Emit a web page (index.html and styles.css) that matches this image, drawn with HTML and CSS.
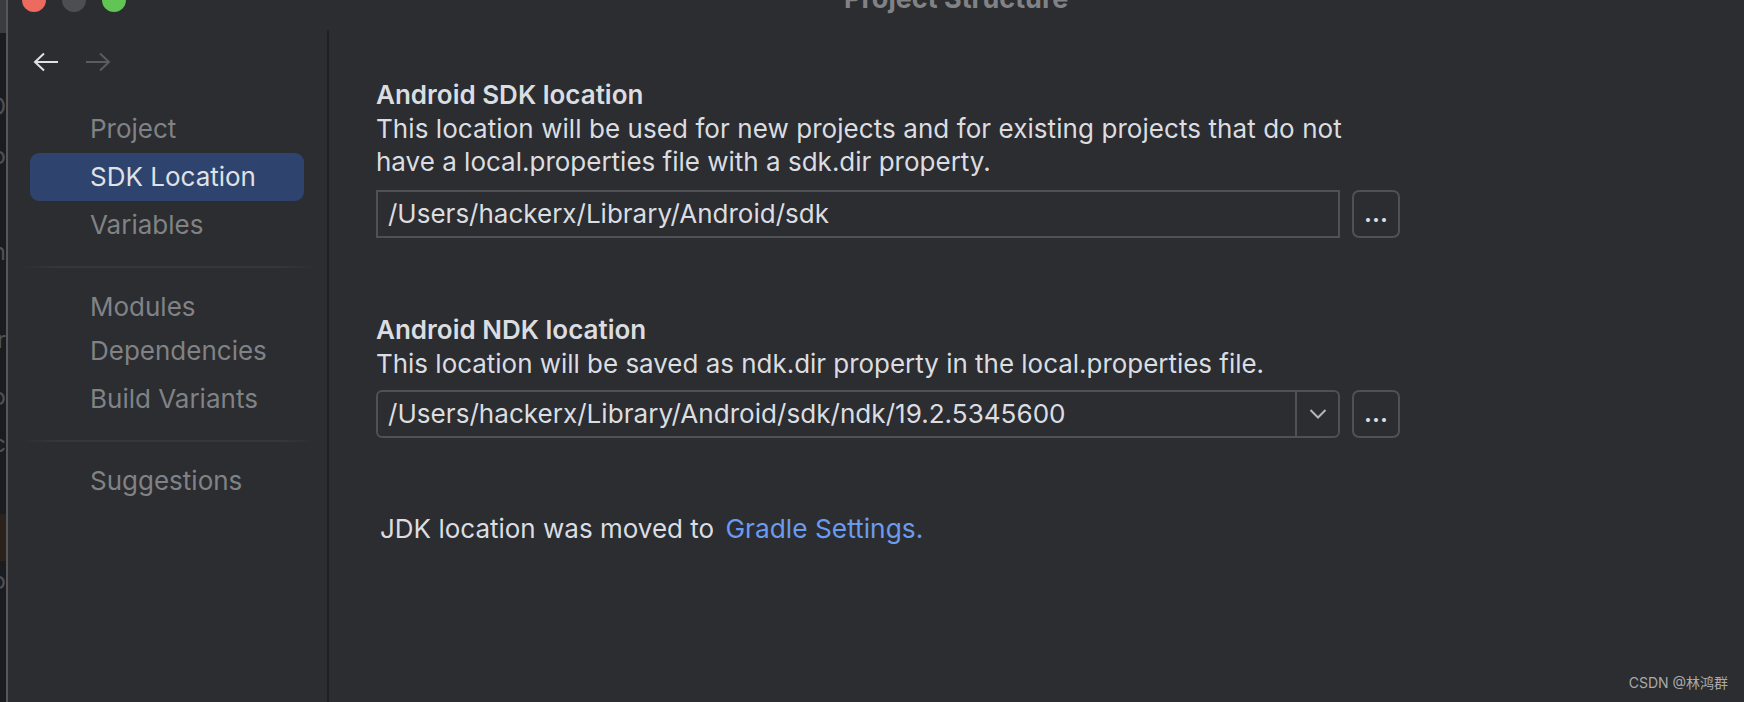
FILE: index.html
```html
<!DOCTYPE html>
<html lang="en">
<head>
  <meta charset="UTF-8">
  <title>Project Structure</title>
  <link rel="stylesheet" href="styles.css">
</head>
<body>
  <div class="strip">
    <div class="strip-tab"></div>
    <span class="strip-glyph g1">D</span>
    <span class="strip-glyph g2">o</span>
    <span class="strip-glyph g3">n</span>
    <span class="strip-glyph g4">r</span>
    <span class="strip-glyph g5">o</span>
    <span class="strip-glyph g6">c</span>
    <div class="strip-patch"></div>
    <span class="strip-glyph g7">o</span>
  </div>

  <div class="window">
    <div class="titlebar">
      <div class="lights">
        <span class="light red"></span>
        <span class="light gray"></span>
        <span class="light green"></span>
      </div>
      <div class="title">Project Structure</div>
    </div>

    <div class="panes">
      <div class="sidebar">
        <div class="nav-arrows">
          <svg class="arrow" width="26" height="20" viewBox="0 0 26 20"><path d="M25 10H2M11 1.500L2 10l9 8.500"/></svg>
          <svg class="arrow off" width="26" height="20" viewBox="0 0 26 20"><path d="M1 10h23M15 1.500l9 8.500-9 8.500"/></svg>
        </div>
        <ul class="menu">
          <li>Project</li>
          <li class="active">SDK Location</li>
          <li>Variables</li>
        </ul>
        <div class="sep"></div>
        <ul class="menu">
          <li>Modules</li>
          <li class="tight">Dependencies</li>
          <li>Build Variants</li>
        </ul>
        <div class="sep"></div>
        <ul class="menu">
          <li>Suggestions</li>
        </ul>
      </div>

      <div class="main">
        <div class="section">
          <h2>Android SDK location</h2>
          <p><span class="wide">This location will be used for new projects and for existing projects that do not</span><br>have a local.properties file with a sdk.dir property.</p>
          <div class="field-row">
            <div class="field square"><span class="value">/Users/hackerx/Library/Android/sdk</span></div>
            <div class="browse">...</div>
          </div>
        </div>

        <div class="section ndk">
          <h2>Android NDK location</h2>
          <p>This location will be saved as ndk.dir property in the local.properties file.</p>
          <div class="field-row">
            <div class="field">
              <span class="value">/Users/hackerx/Library/Android/sdk/ndk/19.2.5345600</span>
              <span class="drop">
                <svg width="18" height="12" viewBox="0 0 18 12"><path d="M1.500 2L9 9.500 16.500 2"/></svg>
              </span>
            </div>
            <div class="browse">...</div>
          </div>
        </div>

        <div class="jdk">JDK location was moved to <a class="link">Gradle Settings.</a></div>
      </div>
    </div>
  </div>

  <div class="mark">CSDN @林鸿群</div>
</body>
</html>
```

FILE: styles.css
```css
html,body{margin:0;padding:0;height:100%;}
body{
  display:flex;
  height:702px;
  overflow:hidden;
  background:#2b2d30;
  font-family:Inter,"Noto Sans CJK SC",sans-serif;
  color:#dbdde1;
  position:relative;
}
ul,li{list-style:none;margin:0;padding:0;}

/* sliver of the window behind */
.strip{
  flex:none;
  width:6px;
  height:702px;
  background:#1b1c1f;
  border-right:2px solid #55575b;
  overflow:hidden;
  display:flex;
  flex-direction:column;
  align-items:flex-end;
  font-size:24px;
  line-height:20px;
  color:#4f5155;
}
.strip-tab{width:6px;height:33px;background:#3a3c40;flex:none;}
.strip-glyph{display:block;flex:none;height:20px;}
.g1{margin-top:64px;}
.g2{margin-top:29px;}
.g3{margin-top:76px;}
.g4{margin-top:68px;}
.g5{margin-top:37px;}
.g6{margin-top:27px;}
.strip-patch{flex:none;width:6px;height:47px;margin-top:60px;background:#2a221b;}
.g7{margin-top:10px;}

.window{flex:1;display:flex;flex-direction:column;min-width:0;}

.titlebar{
  flex:none;
  height:24px;
  margin-top:-12px;
  display:flex;
  align-items:center;
  position:relative;
}
.lights{display:flex;gap:16px;padding-left:14px;}
.light{width:24px;height:24px;border-radius:50%;}
.red{background:#ec6a5e;}
.gray{background:#4d4e51;}
.green{background:#61c554;}
.title{
  position:absolute;
  left:836px;
  top:-4px;
  font-size:27px;
  line-height:30px;
  font-weight:700;
  color:#808286;
  white-space:nowrap;
}

.panes{flex:1;display:flex;min-height:0;padding-top:18px;}

.sidebar{
  flex:none;
  width:321px;
  box-sizing:border-box;
  border-right:2px solid #1f2023;
}
.nav-arrows{display:flex;gap:26px;padding:22px 0 0 25px;height:75px;box-sizing:border-box;align-items:flex-start;}
.arrow{display:block;fill:none;stroke:#dfe1e5;stroke-width:2;}
.arrow.off{stroke:#5a5c61;}
.menu{padding:0 0 0 22px;}
.menu li{
  width:274px;
  height:48px;
  line-height:48px;
  padding-left:60px;
  box-sizing:border-box;
  font-size:26px;
  color:#808286;
  border-radius:9px;
}
.menu li.active{background:#2e436e;color:#dfe1e5;}
.menu li.tight{margin-top:-4px;}
.sep{
  height:2px;
  background:linear-gradient(to right,transparent,#35373b 12%,#35373b 88%,transparent);
  margin:17px 12px 15px 14px;
}

.main{flex:1;padding:48px 0 0 47px;}
.section h2{margin:0;font-size:26px;line-height:34px;font-weight:600;color:#dbdde1;}
.section p{margin:0;font-size:26px;line-height:33px;}
.wide{letter-spacing:0.07px;}
.section.ndk p{font-size:25.95px;}
.field-row{display:flex;gap:12px;margin-top:12px;}
.field{
  box-sizing:border-box;
  width:964px;
  height:48px;
  border:2px solid #4e5157;
  border-radius:6px;
  display:flex;
  align-items:center;
  justify-content:space-between;
}
.field.square{border-radius:0;}
.value{padding:0 0 2px 10px;font-size:26px;white-space:nowrap;}
.ndk .value{font-size:26.1px;}
.drop{
  width:41px;
  height:100%;
  border-left:2px solid #4e5157;
  display:flex;
  align-items:center;
  justify-content:center;
}
.drop svg{fill:none;stroke:#b4b6bb;stroke-width:2;}
.browse{
  box-sizing:border-box;
  width:48px;
  height:48px;
  border:2px solid #4e5157;
  border-radius:7px;
  text-align:center;
  font-size:25px;
  font-weight:600;
  line-height:42px;
}
.ndk{margin-top:75px;}
.ndk .field-row{margin-top:10px;}
.jdk{margin:74px 0 0 4px;font-size:26px;line-height:33px;}
.link{color:#6b9bf0;margin-left:4px;font-size:26.3px;}

.mark{
  position:absolute;
  right:16px;
  bottom:10px;
  font-size:14px;
  line-height:18px;
  color:#a9aaac;
  white-space:nowrap;
}
```
